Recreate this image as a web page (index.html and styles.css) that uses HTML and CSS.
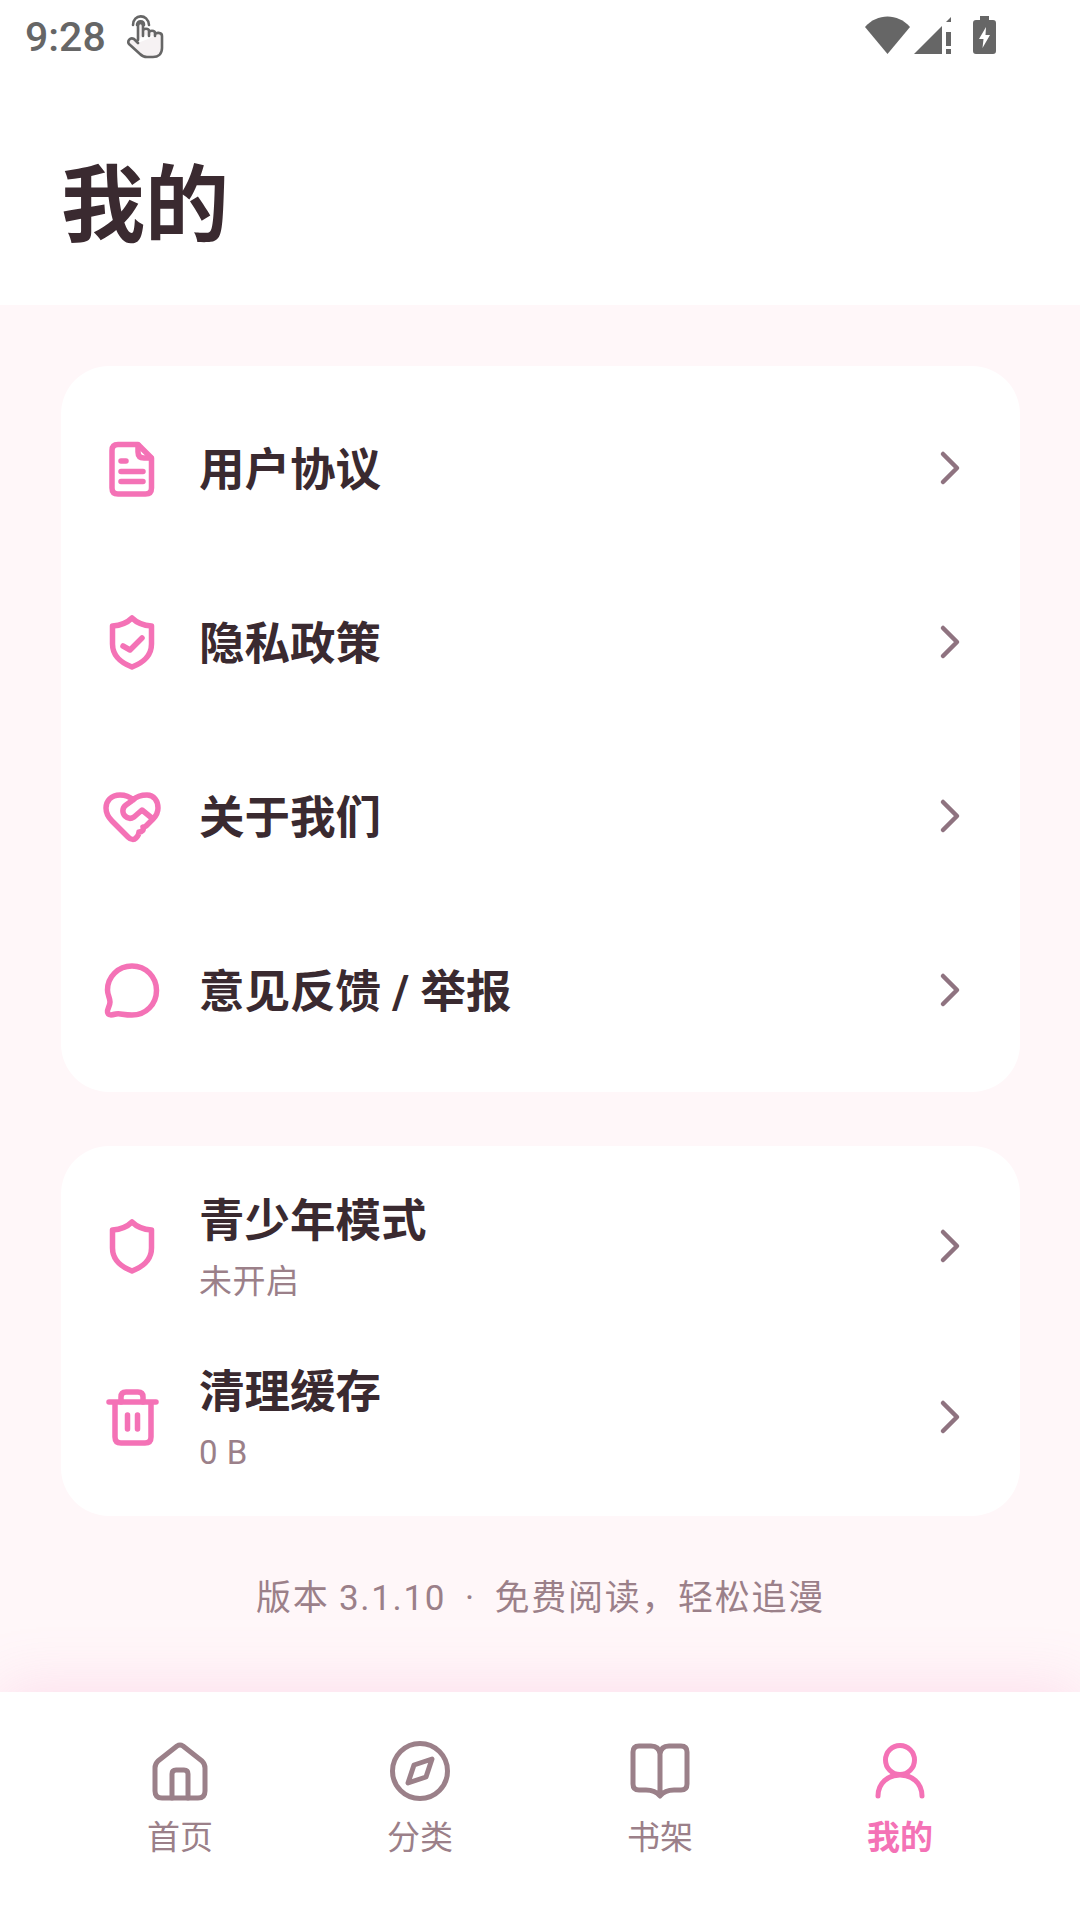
FILE: index.html
```html
<!DOCTYPE html>
<html lang="zh-CN">
<head>
    <meta charset="UTF-8">
    <meta name="viewport" content="width=device-width, initial-scale=1.0">
    <title>我的</title>
    <link rel="stylesheet" href="styles.css">
</head>
<body>
<div class="page">

    <!-- barre de statut -->
    <div class="status-bar">
        <span class="time">9:28</span>
        <svg class="touch-icon" width="40" height="46" viewBox="0 0 40 46" fill="none" stroke="#666" stroke-width="2.6" stroke-linecap="round" stroke-linejoin="round">
            <path d="M7 12 C7 1 22 0 23 12" />
            <path d="M11 12 C11 7 18 7 18 12" />
            <path fill="#f6f2f3" d="M12 27 V13 C12 9 17 9 17 13 V23 M17 21 V18 C17 15 23 15 23 18 V23 M23 22 V20 C23 17 29 17 29 20 V23 M29 23 V22 C29 19 36 19 36 23 V35 C36 41 32 44 27 44 H21 C18 44 16 43 14 41 L3 31 C1 28 4 24 8 26 L12 30" />
        </svg>
        <div class="status-right">
            <svg width="45" height="38" viewBox="0 0 45 38" fill="#666"><path d="M0 11 C12 -3 33 -3 45 11 L22.5 38 Z" /></svg>
            <svg width="37" height="38" viewBox="0 0 37 38" fill="#666"><path d="M0 38 L28 10 V38 Z" /><path d="M32 6 L37 1 V6 Z" /><rect x="32" y="16" width="5" height="14" /><rect x="32" y="33" width="5" height="5" /></svg>
            <svg class="battery" width="23" height="38" viewBox="0 0 23 38" fill="#666"><path d="M7 0 H16 V4 H20 Q23 4 23 7 V35 Q23 38 20 38 H3 Q0 38 0 35 V7 Q0 4 3 4 H7 Z" /><path fill="#fff" d="M13 11 L6 23 H10.5 L9.5 32 L17 19 H12.5 Z" /></svg>
        </div>
    </div>

    <header class="page-header">
        <h1>我的</h1>
    </header>

    <main class="content">
        <section class="card">
            <div class="row">
                <svg class="row-icon" width="60" height="60" viewBox="0 0 60 60">
                    <path d="M17 6.5 H37 L50.5 20 V50 Q50.5 56 44.5 56 H17 Q11 56 11 50 V12.5 Q11 6.5 17 6.5 Z" />
                    <path d="M37 7 V14 Q37 20 43 20 H50" />
                    <path d="M20 23 H25 M20 33.5 H42 M20 43.5 H42" />
                </svg>
                <div class="row-text"><div class="row-title">用户协议</div></div>
                <svg class="chevron" width="40" height="40" viewBox="0 0 40 40"><path d="M13 6 L27 20 L13 34" /></svg>
            </div>
            <div class="row">
                <svg class="row-icon" width="60" height="60" viewBox="0 0 60 60">
                    <path d="M31 6 C36 11 43 13.5 50.5 14 V32 C50.5 45 41 51 31 55 C21 51 11.5 45 11.5 32 V14 C19 13.5 26 11 31 6 Z" />
                    <path d="M22 34 L29 38 L41 26" />
                </svg>
                <div class="row-text"><div class="row-title">隐私政策</div></div>
                <svg class="chevron" width="40" height="40" viewBox="0 0 40 40"><path d="M13 6 L27 20 L13 34" /></svg>
            </div>
            <div class="row">
                <svg class="row-icon" width="60" height="60" viewBox="0 0 60 60">
                    <path d="M32 14 C28 10 24 9 19 9 C10 9 5 15 5 22 C5 27 7 31 11 35 L27 51 C30 54 33 54 35 52 C37 50 38 49 38 46 C41 46 43 44 42 41 C43 41 44 41 45 40 L52 33 C55 30 57 26 57 22 C57 15 53 9 46 9 C41 9 36 10 32 14 L25 19 C21 22 21 27 24 30 C27 33 30 33 33 31 L41 24 L52 33" />
                </svg>
                <div class="row-text"><div class="row-title">关于我们</div></div>
                <svg class="chevron" width="40" height="40" viewBox="0 0 40 40"><path d="M13 6 L27 20 L13 34" /></svg>
            </div>
            <div class="row">
                <svg class="row-icon" width="60" height="60" viewBox="0 0 60 60">
                    <path d="M31 6 C17 6 6.5 17 6.5 30 C6.5 35 9 38 9 42 C9 46 6 49 6.5 52 C7 56 11 55 15 54 C19 53 22 55 31 55 C45 55 55.5 44 55.5 30.5 C55.5 17 45 6 31 6 Z" />
                </svg>
                <div class="row-text"><div class="row-title">意见反馈 / 举报</div></div>
                <svg class="chevron" width="40" height="40" viewBox="0 0 40 40"><path d="M13 6 L27 20 L13 34" /></svg>
            </div>
        </section>

        <section class="card card-small">
            <div class="row">
                <svg class="row-icon" width="60" height="60" viewBox="0 0 60 60">
                    <path d="M31 6 C36 11 43 13.5 50.5 14 V32 C50.5 45 41 51 31 55 C21 51 11.5 45 11.5 32 V14 C19 13.5 26 11 31 6 Z" />
                </svg>
                <div class="row-text">
                    <div class="row-title">青少年模式</div>
                    <div class="row-sub">未开启</div>
                </div>
                <svg class="chevron" width="40" height="40" viewBox="0 0 40 40"><path d="M13 6 L27 20 L13 34" /></svg>
            </div>
            <div class="row">
                <svg class="row-icon" width="60" height="60" viewBox="0 0 60 60">
                    <path d="M8 15 H55 M14 15 V50 Q14 56 20 56 H44 Q50 56 50 50 V15" />
                    <path d="M20 15 V10 Q20 5 25 5 H37 Q42 5 42 10 V15" />
                    <path d="M26.5 28 V42 M36.5 28 V42" />
                </svg>
                <div class="row-text">
                    <div class="row-title">清理缓存</div>
                    <div class="row-sub">0 B</div>
                </div>
                <svg class="chevron" width="40" height="40" viewBox="0 0 40 40"><path d="M13 6 L27 20 L13 34" /></svg>
            </div>
        </section>

        <p class="version">版本 3.1.10 &nbsp;·&nbsp; 免费阅读，轻松追漫</p>
    </main>

    <nav class="tab-bar">
        <div class="tab">
            <svg width="60" height="60" viewBox="0 0 60 60">
                <path d="M27 5 Q30 3 33 5 L52 20 Q55 23 55 27 V50 Q55 57 48 57 H12 Q5 57 5 50 V27 Q5 23 8 20 Z" />
                <path d="M22 57 V33 Q22 29 26 29 H34 Q38 29 38 33 V57" />
            </svg>
            <span>首页</span>
        </div>
        <div class="tab">
            <svg width="60" height="60" viewBox="0 0 60 60">
                <circle cx="30" cy="30" r="27.5" />
                <path d="M42 18 L36 36 L18 42 L24 24 Z" />
            </svg>
            <span>分类</span>
        </div>
        <div class="tab">
            <svg width="60" height="60" viewBox="0 0 60 60">
                <path d="M30 13 Q29 5 21 5 H9 Q3 5 3 11 V43 Q3 49 9 49 H16 Q25 49 30 55 Q35 49 44 49 H51 Q57 49 57 43 V11 Q57 5 51 5 H39 Q31 5 30 13 V54" />
            </svg>
            <span>书架</span>
        </div>
        <div class="tab tab-active">
            <svg width="60" height="60" viewBox="0 0 60 60">
                <circle cx="30" cy="19" r="14.5" />
                <path d="M8 55 C8 42 18 34 30 34 C42 34 52 42 52 55" />
            </svg>
            <span>我的</span>
        </div>
    </nav>

</div>
</body>
</html>
```

FILE: styles.css
```css
* {
    box-sizing: border-box;
}
body {
    margin: 0;
    background: #fff;
    color: #3a2a30;
    font-family: Roboto, "Noto Sans CJK SC", sans-serif;
}
.page {
    display: flex;
    flex-direction: column;
    height: 1920px;
    overflow: hidden;
}

/* barre de statut */
.status-bar {
    display: flex;
    align-items: center;
    height: 72px;
    padding: 0 84px 0 25px;
}
.time {
    margin-top: 2px;
    color: #666;
    font-size: 41px;
    font-weight: 500;
}
.touch-icon {
    margin-left: 20px;
}
.status-right {
    display: flex;
    align-items: center;
    gap: 4px;
    margin-top: -2px;
    margin-left: auto;
}
.battery {
    margin-left: 18px;
}

.page-header {
    display: flex;
    align-items: center;
    height: 233px;
    padding: 38px 61px 0;
}
.page-header h1 {
    margin: 0;
    font-size: 84px;
    font-weight: 700;
    line-height: 1.2;
}

.content {
    flex: 1;
    padding: 61px 60px 0 61px;
    background: #fff7f9;
}
.card {
    padding: 15px 0;
    border-radius: 48px;
    background: #fff;
}
.card-small {
    margin-top: 54px;
    padding: 14px 0;
}
.row {
    display: flex;
    align-items: center;
    height: 174px;
    padding: 0 40px;
}
.card-small .row {
    height: 171px;
}
.row-icon {
    flex: none;
    fill: none;
    stroke: #f472b6;
    stroke-width: 5.5;
    stroke-linecap: round;
    stroke-linejoin: round;
}
.row-text {
    flex: 1;
    margin-left: 38px;
    padding-top: 5px;
}
.card-small .row-text {
    padding-top: 6px;
}
.row-title {
    font-size: 45.5px;
    font-weight: 700;
    line-height: 56px;
}
.row-sub {
    margin-top: 10px;
    color: #9b8089;
    font-size: 33px;
    line-height: 44px;
    letter-spacing: 0.5px;
}
.chevron {
    flex: none;
    margin-right: 10px;
    fill: none;
    stroke: #8f7380;
    stroke-width: 4.5;
    stroke-linecap: round;
    stroke-linejoin: round;
}
.version {
    margin: 57px 0 0;
    color: #9b8089;
    font-size: 35px;
    line-height: 52px;
    letter-spacing: 1.7px;
    word-spacing: -1px;
    text-align: center;
}

/* barre d'onglets */
.tab-bar {
    position: relative;
    display: flex;
    flex: none;
    height: 228px;
    padding: 49px 60px 0;
    background: #fff;
    box-shadow: 0 -6px 56px rgba(244, 114, 182, 0.18);
}
.tab {
    display: flex;
    flex: 1;
    flex-direction: column;
    align-items: center;
    color: #9b8089;
    font-size: 33px;
    line-height: 44px;
}
.tab svg {
    display: block;
    margin-bottom: 15px;
    fill: none;
    stroke: #9b8089;
    stroke-width: 5;
    stroke-linecap: round;
    stroke-linejoin: round;
}
.tab-active {
    color: #f472b6;
    font-weight: 700;
}
.tab-active svg {
    stroke: #f472b6;
}
```
